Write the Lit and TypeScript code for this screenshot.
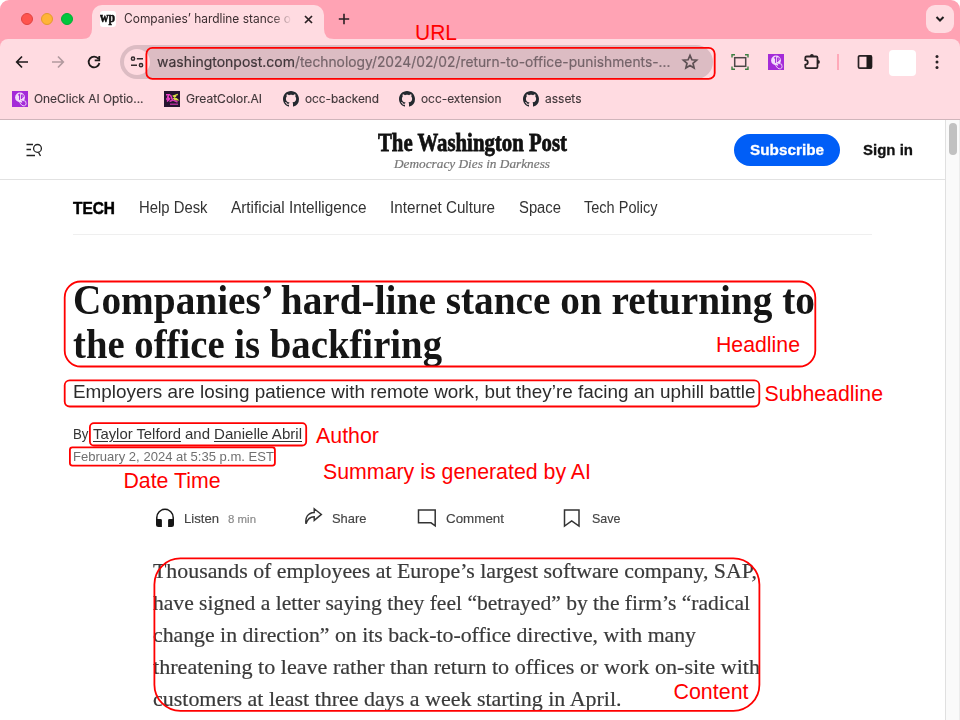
import { LitElement, html, svg, css } from "lit";
import { customElement, property } from "lit/decorators.js";

/** A single line of text set to a fixed measure. */
@customElement("fit-text")
class FitText extends LitElement {
  @property({ type: Number }) measure = 100;
  static styles = css`
    :host { display: inline-block; white-space: nowrap; flex: none; }
    span { display: inline-block; transform-origin: 0 50%; }
  `;
  render() {
    return html`<span><slot></slot></span>`;
  }
  async firstUpdated() {
    this.style.width = this.measure + "px";
    this.fit();
    await document.fonts.ready;
    this.fit();
  }
  fit() {
    const s = this.renderRoot.querySelector("span") as HTMLElement;
    s.style.transform = "none";
    const w = s.getBoundingClientRect().width;
    if (w) s.style.transform = `scaleX(${this.measure / w})`;
  }
}

const ft = (w: number, text: unknown, cls = "") =>
  html`<fit-text class=${cls} measure=${w}>${text}</fit-text>`;

const github = html`<svg width="16" height="16" viewBox="0 0 16 16"><path fill="#24292f" d="M8 0C3.58 0 0 3.58 0 8c0 3.54 2.29 6.53 5.47 7.59.4.07.55-.17.55-.38 0-.19-.01-.82-.01-1.49-2.01.37-2.53-.49-2.69-.94-.09-.23-.48-.94-.82-1.13-.28-.15-.68-.52-.01-.53.63-.01 1.08.58 1.23.82.72 1.21 1.87.87 2.33.66.07-.52.28-.87.51-1.07-1.78-.2-3.64-.89-3.64-3.95 0-.87.31-1.59.82-2.15-.08-.2-.36-1.02.08-2.12 0 0 .67-.21 2.2.82.64-.18 1.32-.27 2-.27s1.36.09 2 .27c1.53-1.04 2.2-.82 2.2-.82.44 1.1.16 1.92.08 2.12.51.56.82 1.27.82 2.15 0 3.07-1.87 3.75-3.65 3.95.29.25.54.73.54 1.48 0 1.07-.01 1.93-.01 2.2 0 .21.15.46.55.38A8.01 8.01 0 0016 8c0-4.42-3.58-8-8-8z"/></svg>`;

const oneclick = html`<svg width="16" height="16" viewBox="0 0 16 16"><rect width="16" height="16" fill="#a42bd8"/><circle cx="8" cy="6.400" r="4.900" fill="#f3dcfb"/><path d="M6.200 4.200 7.600 3.300V9M9.600 3.400v4.600M9.600 4h1.200q1.200 1.400-.2 2.300H9.600" fill="none" stroke="#a42bd8" stroke-width="1.100"/><path d="M8.200 8.300 10 11.200l-1.700-.3-.6.8 2 2.300c1.600 1.600 4.300.9 4.400-1.200l-.5-2.600-3-.8z" fill="#a42bd8" stroke="#f3dcfb" stroke-width=".9"/></svg>`;

const greatcolor = html`<svg width="16" height="16" viewBox="0 0 16 16"><rect width="16" height="16" fill="#25152f"/><g fill="none" stroke-width="1.500"><path stroke="#ec3fc6" d="M2 3.800h3.200L3.600 6.200l2 1.600L3 10.500M6.500 4l2.200 5.500M2 8h3"/><path stroke="#d9dc45" d="M13.800 3.400 9.500 5l4 3.800H10M9 7.500l3-2.500"/><path stroke="#d436b1" d="M5.500 10.500 9 9l4.500 2"/><path stroke="#a82e91" d="M6 13.300h8"/></g></svg>`;

@customElement("app-root")
class AppRoot extends LitElement {
  static styles = css`
    :host { display: block; position: relative; width: 960px; height: 720px; overflow: hidden; background: #fff; font-family: "Liberation Sans", Arial, sans-serif; color: #2a2a2a; }
    svg { display: block; flex: none; }
    .browser { width: 960px; height: 120px; box-sizing: border-box; background: #ffa3b4; border-radius: 9px 9px 0 0; font-family: Inter, sans-serif; overflow: hidden; }
    .tabs { height: 39px; display: flex; align-items: flex-start; }
    .lights { display: flex; gap: 8px; padding: 13px 0 0 21px; width: 61px; }
    .light { width: 12px; height: 12px; border-radius: 50%; box-sizing: border-box; border: 1px solid #df4340; background: #ff544e; }
    .light.amber { background: #ffb437; border-color: #e39b2c; }
    .light.green { background: #00c73c; border-color: #00ad35; }
    .tabwrap { display: flex; align-items: flex-end; height: 39px; }
    .tab { width: 232px; height: 34px; background: #ffdbe1; border-radius: 10px 10px 0 0; display: flex; align-items: center; box-sizing: border-box; padding: 0 10px 6px 8px; }
    .fav { width: 16px; height: 16px; border-radius: 3px; background: #fff; font: bold 14px/14px "Liberation Serif", serif; color: #111; overflow: hidden; -webkit-text-stroke: .6px #111; }
    .tabtitle { width: 167px; overflow: hidden; margin-left: 8px; font-size: 12.5px; line-height: 16px; color: #3b2d30; -webkit-mask-image: linear-gradient(90deg, #000 148px, transparent 168px); mask-image: linear-gradient(90deg, #000 148px, transparent 168px); }
    .tabclose { margin-left: 13px; }
    .plus { margin: 13px 0 0 4px; }
    .more { margin: 5px 6px 0 auto; width: 28px; height: 28px; border-radius: 9px; background: #ffdbe1; display: grid; place-items: center; }
    .tools { height: 81px; background: #ffdbe1; border-radius: 8px 8px 0 0; border-bottom: 1px solid #d0b5bb; box-sizing: border-box; }
    .bar { height: 46px; display: flex; align-items: center; padding-left: 12px; }
    .navs { display: flex; gap: 16px; width: 108px; }
    .omni { width: 593px; height: 34px; border-radius: 17px; background: #dcbcc3; display: flex; align-items: center; box-sizing: border-box; padding-left: 4px; font-size: 14px; line-height: 20px; }
    .site { width: 26px; height: 26px; border-radius: 50%; background: #ffdbe1; display: grid; place-items: center; margin-right: 7px; }
    .domain { color: #40363a; -webkit-text-stroke: .2px #40363a; }
    .path { color: #75646a; -webkit-text-stroke: .2px #75646a; }
    .star { margin-left: 10px; }
    .exts { display: flex; align-items: center; flex: 1; padding-left: 18px; }
    .exts .e1 { margin-left: 19px; }
    .exts .e2 { margin-left: 18px; }
    .rule { width: 2px; height: 16px; background: #ffa9b9; margin: 0 16px 0 15px; }
    .avatar { width: 27px; height: 26px; border-radius: 4px; background: #fff; margin: 1px 18px 0 14px; }
    .marks { display: flex; height: 28px; align-items: center; padding-left: 12px; font-size: 12.3px; line-height: 16px; color: #41373a; }
    .mark { display: flex; align-items: center; gap: 6px; margin-right: 20.7px; }
    .mark.first { margin-right: 20.5px; }
    .marks fit-text { -webkit-text-stroke: .15px #41373a; }

    .content { display: flex; height: 600px; }
    .page { width: 945px; overflow: hidden; }
    .scroll { width: 15px; box-sizing: border-box; border-left: 1px solid #e0e0e0; border-right: 1px solid #ececec; background: #fafafa; padding: 3px 0 0 3px; }
    .thumb { width: 8px; height: 32px; border-radius: 4px; background: #c1c1c1; }
    .head { height: 60px; box-sizing: border-box; border-bottom: 1px solid #e2e2e2; display: flex; padding-left: 26px; }
    .menu { margin-top: 23px; width: 352px; }
    .brand { display: flex; flex-direction: column; width: 189px; padding-top: 8px; }
    .logo { font: bold 26px/29px "Liberation Serif", serif; color: #111; -webkit-text-stroke: .8px #111; }
    .motto { font: italic 12.5px/14px "Liberation Serif", serif; color: #777; padding-left: 16px; -webkit-text-stroke: .2px #777; }
    .sub { margin: 14px 0 0 167px; width: 106px; height: 32px; border-radius: 16px; background: #005ef7; color: #fff; font: bold 15.5px/31px "Liberation Sans", sans-serif; box-sizing: border-box; padding-left: 16px; -webkit-text-stroke: .3px #fff; }
    .sign { margin: 14px 0 0 23px; font: bold 15.5px/31px "Liberation Sans", sans-serif; color: #111; -webkit-text-stroke: .3px #111; }
    .nav { margin-left: 73px; width: 799px; height: 55px; box-sizing: border-box; border-bottom: 1px solid #efefef; display: flex; align-items: center; font-size: 15.6px; line-height: 20px; padding-top: 2px; color: #333; }
    .nav fit-text { margin-right: 23.700px; }
    .nav .tech { font-weight: bold; color: #000; font-size: 16.5px; -webkit-text-stroke: .5px #000; }
    h1 { margin: 42px 0 0 72.500px; font: bold 43px/44px "Liberation Serif", serif; color: #151515; height: 88px; display: flex; flex-direction: column; padding-top: 1px; box-sizing: border-box; }
    .subhead { margin: 15px 0 0 72.500px; font-size: 19px; line-height: 24px; height: 24px; display: flex; color: #2c2c2c; }
    .by { margin: 20px 0 0 72.500px; height: 20px; display: flex; font-size: 14.8px; line-height: 20px; color: #333; }
    .by .a1 { margin-left: 5px; margin-right: 4px; }
    .by .a2 { margin-left: 3.5px; }
    .by u { text-decoration-thickness: 1px; text-underline-offset: 2px; }
    .date { margin: 3px 0 0 72.500px; height: 18px; display: flex; font-size: 13.3px; line-height: 19px; color: #707070; }
    .acts { margin: 43px 0 0 155px; height: 20px; display: flex; align-items: center; font-size: 13px; line-height: 20px; color: #444; }
    .act { display: flex; align-items: center; }
    .act fit-text { padding-top: 1px; -webkit-text-stroke: .15px currentColor; }
    .min { font-size: 11px; color: #888; margin-left: 9px; }
    .a-listen { width: 149px; gap: 0; }
    .a-listen svg { margin-right: 9px; }
    .a-share { width: 113px; }
    .a-share svg { margin: -2px 9px 0 0; }
    .a-comment { width: 146px; }
    .a-comment svg { margin-right: 9px; }
    .a-save svg { margin-right: 11px; }
    .body { margin: 26px 0 0 153px; display: flex; flex-direction: column; font: 21.5px/32px "Liberation Serif", serif; color: #3a3a3a; padding-top: 1px; -webkit-text-stroke: .2px #3a3a3a; }
    .notes { position: absolute; left: 0; top: 0; }
    .notes rect { fill: none; stroke: #f00; stroke-width: 1.8; }
    .notes text { fill: #f00; font: 21.4px "Liberation Sans", Arial, sans-serif; }
  `;

  mark(icon: unknown, w: number, text: string, cls = "") {
    return html`<div class="mark ${cls}">${icon}${ft(w, text)}</div>`;
  }

  render() {
    const boxes = [
      [146.4, 47.9, 568.3, 31, 6],
      [64.7, 281.5, 750.6, 85, 16],
      [64.7, 380.3, 694.6, 26.2, 5],
      [89.9, 423.2, 216.3, 22.3, 4],
      [69.9, 447.3, 205, 18.3, 2.5],
      [154.4, 558.4, 605, 152.4, 26],
    ];
    const labels: [number, number, number, string][] = [
      [415, 40, 42, "URL"],
      [716, 351.7, 84, "Headline"],
      [764.5, 401, 118.5, "Subheadline"],
      [316, 442.5, 63, "Author"],
      [123.5, 487.7, 97, "Date Time"],
      [323, 479, 268, "Summary is generated by AI"],
      [673.5, 699.2, 75, "Content"],
    ];
    return html`
      <div class="browser">
        <div class="tabs">
          <div class="lights"><i class="light"></i><i class="light amber"></i><i class="light green"></i></div>
          <div class="tabwrap">
            <svg width="10" height="10"><path d="M10 0V10H0Q10 10 10 0Z" fill="#ffdbe1"/></svg>
            <div class="tab">
              <div class="fav">${ft(15, "wp")}</div>
              <div class="tabtitle">${ft(167, "Companies’ hardline stance o")}</div>
              <svg class="tabclose" width="9" height="9"><path d="M1 1 8 8M8 1 1 8" stroke="#2b2023" stroke-width="1.7"/></svg>
            </div>
            <svg width="10" height="10"><path d="M0 0V10H10Q0 10 0 0Z" fill="#ffdbe1"/></svg>
          </div>
          <svg class="plus" width="12" height="12"><path d="M6 .8V11.2M.8 6H11.2" stroke="#2b2023" stroke-width="1.6"/></svg>
          <div class="more"><svg width="10" height="8"><path d="M1.5 2 5 5.5 8.5 2" fill="none" stroke="#1f1f1f" stroke-width="2"/></svg></div>
        </div>
        <div class="tools">
          <div class="bar">
            <div class="navs">
              <svg width="20" height="20" fill="none" stroke="#1f1a1b" stroke-width="1.7"><path d="M16 10H5M10 4.5 4.7 10l5.3 5.5"/></svg>
              <svg width="20" height="20" fill="none" stroke="#b29a9f" stroke-width="1.7"><path d="M4 10h11M10 4.5l5.3 5.5-5.3 5.5"/></svg>
              <svg width="20" height="20" fill="none" stroke="#1f1a1b" stroke-width="1.8"><path d="M14.4 6.7A5.4 5.4 0 1 0 15.4 11M15.3 4v4.4h-4.6"/></svg>
            </div>
            <div class="omni">
              <div class="site"><svg width="14" height="12" fill="none" stroke="#332b2d" stroke-width="1.5"><circle cx="3" cy="2.7" r="1.6"/><path d="M6.8 2.7H13M1 9.2h6"/><circle cx="11" cy="9.2" r="1.6"/></svg></div>
              ${ft(138, "washingtonpost.com", "domain")}${ft(375.5, "/technology/2024/02/02/return-to-office-punishments-...", "path")}
              <svg class="star" width="18" height="18" viewBox="0 0 18 18"><path d="m9 2.400 1.900 4.400 4.700.4-3.600 3.100 1.100 4.700L9 12.500 4.900 15 6 10.300 2.400 7.200l4.700-.4z" fill="none" stroke="#5e5054" stroke-width="1.700"/></svg>
            </div>
            <div class="exts">
              <svg width="18" height="16" fill="none"><rect x="3.700" y="3.700" width="11" height="8.600" stroke="#4d4648" stroke-width="1.500"/><path d="M1 3.500V.8h3M14 .8h3v2.700M17 12.500v2.700h-3M4 15.200H1v-2.700" stroke="#3b7f42" stroke-width="1.400"/></svg>
              <span class="e1">${oneclick}</span>
              <svg class="e2" width="20" height="20" viewBox="0 0 20 20"><path d="M4.600 4.500h9.600q1.300 0 1.300 1.300v9q0 1.300-1.300 1.300H4.600q-1.300 0-1.300-1.300v-2.200q2.500 0 2.500-2.200T3.300 8.200V5.800q0-1.300 1.300-1.300z" fill="none" stroke="#292224" stroke-width="1.800" stroke-linejoin="round"/><path d="M8 4a1.900 1.900 0 0 1 3.800 0zM16 8a1.900 1.900 0 0 1 0 3.800z" fill="#292224"/></svg>
              <div class="rule"></div>
              <svg width="20" height="16"><rect x="3.500" y="1.800" width="13" height="12.400" rx="1.300" fill="none" stroke="#292224" stroke-width="1.700"/><path d="M11.500 1.500H16.700V14.500H11.500z" fill="#1f1a1b"/></svg>
              <div class="avatar"></div>
              <svg width="6" height="16" fill="#292224"><circle cx="3" cy="2.500" r="1.500"/><circle cx="3" cy="8" r="1.500"/><circle cx="3" cy="13.500" r="1.500"/></svg>
            </div>
          </div>
          <div class="marks">
            ${this.mark(oneclick, 109.5, "OneClick AI Optio...", "first")}
            ${this.mark(greatcolor, 76, "GreatColor.AI")}
            ${this.mark(github, 74, "occ-backend")}
            ${this.mark(github, 80.500, "occ-extension")}
            ${this.mark(github, 36.500, "assets")}
          </div>
        </div>
      </div>
      <div class="content">
        <div class="page">
          <div class="head">
            <svg class="menu" width="352" height="16" fill="none" stroke="#222" stroke-width="1.300"><path d="M.5 1.500h6.500M.5 6.500h4.500M.5 12.500h8.500M12.500 9.400l2 3.600"/><circle cx="11.500" cy="5.400" r="3.900"/></svg>
            <div class="brand">
              ${ft(189, "The Washington Post", "logo")}
              <div class="motto">${ft(156, "Democracy Dies in Darkness")}</div>
            </div>
            <div class="sub">${ft(74, "Subscribe")}</div>
            <div class="sign">${ft(50, "Sign in")}</div>
          </div>
          <div class="nav">
            ${ft(42, "TECH", "tech")}${ft(68.500, "Help Desk")}${ft(135.500, "Artificial Intelligence")}${ft(105, "Internet Culture")}${ft(42, "Space")}${ft(73.500, "Tech Policy")}
          </div>
          <h1>${ft(742, "Companies’ hard-line stance on returning to")}${ft(369, "the office is backfiring")}</h1>
          <div class="subhead">${ft(682.500, "Employers are losing patience with remote work, but they’re facing an uphill battle")}</div>
          <div class="by">${ft(15.500, "By")}${ft(88, html`<u>Taylor Telford</u>`, "a1")}${ft(25, "and")}${ft(88, html`<u>Danielle Abril</u>`, "a2")}</div>
          <div class="date">${ft(201, "February 2, 2024 at 5:35 p.m. EST")}</div>
          <div class="acts">
            <div class="act a-listen"><svg width="20" height="20"><path d="M1.800 16V9.500a8.200 8.200 0 0 1 16.400 0V16" fill="none" stroke="#161616" stroke-width="1.500"/><path d="M1 11h4.600q1.300 0 1.300 1.300V19H3.500Q1 19 1 16.500zM19 11h-4.600q-1.300 0-1.300 1.300V19h3.400q2.500 0 2.500-2.500z" fill="#161616"/></svg>${ft(35, "Listen")}${ft(28, "8 min", "min")}</div>
            <div class="act a-share"><svg width="19" height="20" viewBox="0 0 19 20"><path d="M10.200 1.800 17.400 7.400l-7.200 6V9.800C6 9.800 3.500 12 2 16.800 .8 10.500 4 5.800 10.200 5.500z" fill="none" stroke="#333" stroke-width="1.400"/></svg>${ft(34.500, "Share")}</div>
            <div class="act a-comment"><svg width="20" height="20"><path d="M1.500 2H18.200V17.800L14 14.800H1.500z" fill="none" stroke="#333" stroke-width="1.500"/></svg>${ft(58, "Comment")}</div>
            <div class="act a-save"><svg width="18" height="20"><path d="M1.500 2H16V18L8.700 13 1.500 18z" fill="none" stroke="#333" stroke-width="1.500"/></svg>${ft(28.500, "Save")}</div>
          </div>
          <div class="body">
            ${ft(604, "Thousands of employees at Europe’s largest software company, SAP,")}
            ${ft(597, "have signed a letter saying they feel “betrayed” by the firm’s “radical")}
            ${ft(543, "change in direction” on its back-to-office directive, with many")}
            ${ft(607, "threatening to leave rather than return to offices or work on-site with")}
            ${ft(468.500, "customers at least three days a week starting in April.")}
          </div>
        </div>
        <div class="scroll"><div class="thumb"></div></div>
      </div>
      <svg class="notes" width="960" height="720">
        ${boxes.map(([x, y, w, h, r]) => svg`<rect x=${x} y=${y} width=${w} height=${h} rx=${r}></rect>`)}
        ${labels.map(([x, y, w, t]) => svg`<text x=${x} y=${y} textLength=${w} lengthAdjust="spacingAndGlyphs">${t}</text>`)}
      </svg>
    `;
  }
}
